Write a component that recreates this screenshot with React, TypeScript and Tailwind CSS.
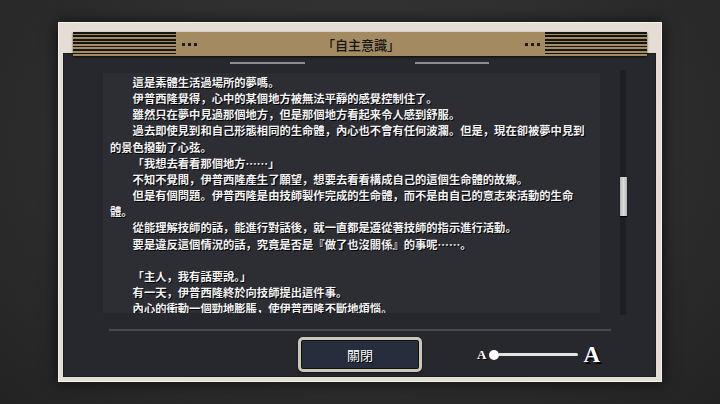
import React from "react";

const lines: { t: string; i: boolean }[] = [
  { t: "這是素體生活過場所的夢嗎。", i: true },
  { t: "伊普西隆覺得，心中的某個地方被無法平靜的感覺控制住了。", i: true },
  { t: "雖然只在夢中見過那個地方，但是那個地方看起来令人感到舒服。", i: true },
  { t: "過去即使見到和自己形態相同的生命體，內心也不會有任何波瀾。但是，現在卻被夢中見到", i: true },
  { t: "的景色撥動了心弦。", i: false },
  { t: "「我想去看看那個地方……」", i: true },
  { t: "不知不覺間，伊普西隆產生了願望，想要去看看構成自己的這個生命體的故鄉。", i: true },
  { t: "但是有個問題。伊普西隆是由技師製作完成的生命體，而不是由自己的意志來活動的生命", i: true },
  { t: "體。", i: false },
  { t: "從能理解技師的話，能進行對話後，就一直都是遵從著技師的指示進行活動。", i: true },
  { t: "要是違反這個情況的話，究竟是否是『做了也沒關係』的事呢……。", i: true },
  { t: "", i: false },
  { t: "「主人，我有話要說。」", i: true },
  { t: "有一天，伊普西隆終於向技師提出這件事。", i: true },
  { t: "內心的衝動一個勁地膨脹，使伊普西隆不斷地煩惱。", i: true },
];

function Dots() {
  return (
    <div className="flex gap-[3px]">
      <span className="w-[3px] h-[3px] bg-[#1a1a1a]" />
      <span className="w-[3px] h-[3px] bg-[#1a1a1a]" />
      <span className="w-[3px] h-[3px] bg-[#1a1a1a]" />
    </div>
  );
}

export default function App() {
  return (
    <div className="w-[720px] h-[404px] overflow-hidden bg-[#2c2c2c] bg-[image:radial-gradient(ellipse_at_50%_35%,#3a3a3a_0%,#2e2e2e_55%,#232323_100%)] pt-[22px] pl-[58px] font-['Noto_Sans_CJK_JP','Noto_Sans_CJK_TC',sans-serif]">
      <div className="w-[604px] h-[360px] bg-[#e4ddd4] border border-[#f5f1eb] shadow-[0_0_14px_rgba(0,0,0,0.7)] flex flex-col">
        {/* header band */}
        <div className="relative z-10 ml-[14px] mt-[9px] w-[574px] h-[24px] bg-[#a38a61] flex items-center shadow-[0_1px_2px_rgba(0,0,0,0.7)]">
          <div className="w-[103px] h-full bg-[image:repeating-linear-gradient(to_bottom,#141414_0px,#141414_1.7px,#a38a61_1.7px,#a38a61_3.43px)]" />
          <div className="ml-[6px]">
            <Dots />
          </div>
          <div className="flex-1 text-center text-[13px] leading-none text-[#151515] font-['Noto_Sans_CJK_JP',sans-serif] font-medium">
            「自主意識」
          </div>
          <div className="mr-[5px]">
            <Dots />
          </div>
          <div className="w-[102px] h-full bg-[image:repeating-linear-gradient(to_bottom,#141414_0px,#141414_1.7px,#a38a61_1.7px,#a38a61_3.43px)]" />
        </div>

        {/* dark panel */}
        <div className="-mt-[3px] ml-[4px] w-[593px] h-[324px] bg-[#27282d] shadow-[inset_0_0_0_1px_#1b1c20] flex flex-col pt-[9px]">
          <div className="flex justify-center gap-[110px]">
            <div className="w-[75px] h-[2px] bg-[#8d8d8d]" />
            <div className="w-[74px] h-[2px] bg-[#8d8d8d]" />
          </div>

          <div className="mt-[6px] flex items-start">
            <div className="ml-[40px] mt-[3px] w-[497px] h-[240px] bg-[#2d2e34] overflow-hidden pl-[7px] pt-[1px] text-[11.3px] leading-[16.15px] text-[#f3f3f3] font-bold [text-shadow:1px_1px_0_#000]">
              {lines.map((l, k) =>
                l.t === "" ? (
                  <div key={k} className="h-[16.15px]" />
                ) : (
                  <div key={k} className={l.i ? "whitespace-nowrap pl-[22.6px]" : "whitespace-nowrap"}>
                    {l.t}
                  </div>
                )
              )}
            </div>
            <div className="ml-[20px] w-[6px] h-[245px] bg-[#1e1f23] pt-[107px]">
              <div className="w-[7px] h-[39px] bg-[#c9c9c9] bg-[image:linear-gradient(to_right,#b5b5b5,#dcdcdc_50%,#b5b5b5)] shadow-[0_1px_1px_#000]" />
            </div>
          </div>

          <div className="mt-[14px] ml-[46px] w-[502px] h-[2px] bg-[#464a53]" />

          <div className="mt-[6px] ml-[46px] w-[502px] grid grid-cols-[1fr_124px_1fr] items-center">
            <div />
            <div className="h-[35px] rounded-[5px] border-[3px] border-[#cdc7b8] bg-[#262d3c] shadow-[inset_0_0_0_1px_#0d0f14,0_1px_2px_rgba(0,0,0,0.6)] flex items-center justify-center text-white text-[13px] [text-shadow:1px_1px_0_#000]">
              關閉
            </div>
            <div className="flex justify-end pr-[11px]">
              <div className="flex items-center">
                <span className="text-[13px] leading-none font-bold text-white font-['Liberation_Serif',serif] [text-shadow:1px_1px_0_#000]">
                  A
                </span>
                <span className="ml-[3px] w-[10px] h-[10px] rounded-full bg-white" />
                <span className="w-[79px] h-[3px] bg-[#e3e3e3] rounded-r-full" />
                <span className="ml-[5px] text-[23px] leading-none font-bold text-white font-['Liberation_Serif',serif] [text-shadow:2px_2px_0_#000]">
                  A
                </span>
              </div>
            </div>
          </div>
        </div>
      </div>
    </div>
  );
}
